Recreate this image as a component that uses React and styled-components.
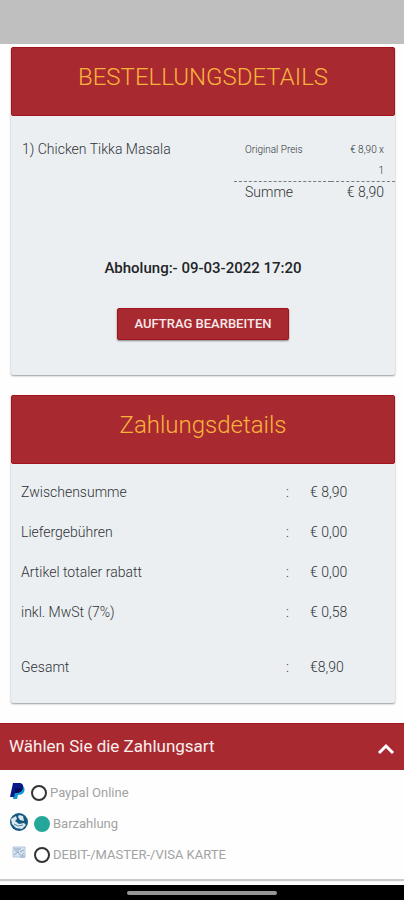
import React, { useState } from "react";
import styled, { createGlobalStyle } from "styled-components";

const GlobalStyle = createGlobalStyle`
  *, *::before, *::after { box-sizing: border-box; }
  body {
    margin: 0;
    background: #fefefe;
    color: #303336;
    font-family: Roboto, "Liberation Sans", sans-serif;
    font-size: 14px;
    line-height: 20px;
  }
`;

const Screen = styled.div`
  display: flex;
  flex-direction: column;
  min-height: 100vh;
`;

const StatusBar = styled.div`
  height: 44px;
  background: #bfbfbf;
`;

const Content = styled.main`
  flex: 1;
  display: flex;
  flex-direction: column;
  gap: 20px;
  padding-top: 3px;
`;

const Card = styled.section`
  margin: 0 9px 0 11px;
  background: #ebeff2;
  border-radius: 2px;
  box-shadow: 0 1px 2px rgba(0, 0, 0, 0.4);
`;

const CardTitle = styled.h2`
  margin: 0;
  padding: 14px 12px 22px;
  background: #a82a30;
  border: 1px solid #a3141c;
  border-radius: 2px;
  color: #fab43c;
  font-size: 24px;
  font-weight: 300;
  line-height: 31px;
  text-align: center;
`;

const OrderBody = styled.div`
  padding: 21px 0 35px;
`;

const OrderItem = styled.div`
  display: grid;
  grid-template-columns: 212fr 161fr;
  padding-left: 11px;
`;

const ItemName = styled.span`
  line-height: 24px;
  font-weight: 300;
`;

const PriceTable = styled.table`
  width: 100%;
  border-collapse: collapse;
  table-layout: fixed;
`;

const PriceRow = styled.tr`
  font-size: ${(p) => (p.$total ? "14px" : "10px")};
  font-weight: 300;
  line-height: ${(p) => (p.$total ? "20px" : "21px")};
  border-top: ${(p) => (p.$total ? "1px dashed #777b7e" : "0")};
`;

const PriceLabel = styled.th`
  padding: ${(p) => (p.$total ? "0" : "2px")} 0 0 11px;
  font-weight: inherit;
  text-align: left;
  vertical-align: top;
`;

const PriceValue = styled.td`
  width: 64px;
  padding: ${(p) => (p.$total ? "0" : "2px")} 11px 0 8px;
  text-align: right;
  vertical-align: top;
`;

const PickupTime = styled.p`
  margin: 56px 0 30px;
  color: #222426;
  font-size: 15px;
  font-weight: 500;
  text-align: center;
`;

const EditButton = styled.button`
  display: block;
  margin: 0 auto;
  padding: 6px 17px;
  border: 1px solid #a3141c;
  border-radius: 2px;
  background: #a82a30;
  box-shadow: 0 1px 2px rgba(0, 0, 0, 0.45);
  color: #f7e9ea;
  font: 500 13px/18px Roboto, "Liberation Sans", sans-serif;
  text-transform: uppercase;
  cursor: pointer;
`;

const Totals = styled.dl`
  display: flex;
  flex-direction: column;
  gap: 20px;
  margin: 0;
  padding: 18px 10px 26px;
  font-weight: 300;
`;

const TotalRow = styled.div`
  display: grid;
  grid-template-columns: 265fr 24px 75fr;
  margin-top: ${(p) => (p.$separated ? "15px" : "0")};
`;

const TotalLabel = styled.dt`
  min-width: 0;
`;

const TotalValue = styled.dd`
  margin: 0;
`;

const PaymentPanel = styled.section`
  margin-bottom: 5px;
  background: #fefefe;
  box-shadow: 0 2px 1px #cacaca;
`;

const PaymentToggle = styled.button`
  display: flex;
  justify-content: space-between;
  width: 100%;
  padding: 11px 8px 12px 9px;
  border: 0;
  border-top: 1px solid #a3141c;
  background: #a82a30;
  color: #fbeeee;
  font: 400 17px/23px Roboto, "Liberation Sans", sans-serif;
  text-align: left;
  cursor: pointer;
`;

const Chevron = styled.svg`
  align-self: flex-end;
  width: 20px;
  height: 20px;
  transform: ${(p) => (p.$open ? "none" : "rotate(180deg)")};
`;

const PaymentList = styled.div`
  padding: 7px 9px 9px;
  font-size: 13px;
`;

const PaymentOption = styled.label`
  display: flex;
  align-items: center;
  height: 31px;
  color: #a2a2a2;
  cursor: pointer;
`;

const IconSlot = styled.span`
  display: flex;
  width: ${(p) => (p.$wide ? "25px" : "22px")};
  height: 24px;
`;

const Radio = styled.input`
  appearance: none;
  width: 16px;
  height: 16px;
  margin: 0 3px 0 0;
  border: 2px solid #333;
  border-radius: 50%;
  background: #fff;

  &:checked {
    border-color: #26a69a;
    background: #26a69a;
  }
`;

const NavigationBar = styled.div`
  display: flex;
  justify-content: center;
  padding: 6px 0;
  height: 15px;
  background: #000;
`;

const HomeIndicator = styled.div`
  width: 37%;
  height: 4px;
  border-radius: 2px;
  background: #969696;
`;

const PaypalIcon = () => (
  <svg width="17" height="20" viewBox="0 0 17 20" aria-hidden="true">
    <path d="M6 5h7c3 1 3 4 2 6-1 2-3 3-6 3l-1 4H4z" fill="#139ad6" />
    <path d="M4 2h6c3 0 5 2 4 5-1 4-4 5-8 5l-1 4H1z" fill="#08198c" />
    <path d="M6 7h8c-1 4-4 5-8 5z" fill="#06105e" />
  </svg>
);

const CashIcon = () => (
  <svg width="20" height="20" viewBox="0 0 20 20" aria-hidden="true">
    <circle cx="10" cy="10" r="9" fill="#17587f" />
    <path d="M2 7l5-3 1 3-2 2 4 3 5-1 2 2-4 4-6-1-4-4z" fill="#dce9ef" />
    <path d="M10 3l4 1 1 5-4-1-2-3z" fill="#dce9ef" />
    <path d="M5 12l4 2 5-1" fill="none" stroke="#4f8aa8" />
  </svg>
);

const CardIcon = () => (
  <svg width="20" height="20" viewBox="0 0 20 20" aria-hidden="true">
    <path d="M4 4h12v10H4z" fill="#d7e3ef" stroke="#b4c8dc" />
    <path d="M5 6h7M6 8h4M11 9l4-2M5 12l4-3 3 4 3-3" fill="none" stroke="#8ba9c6" />
    <path d="M11 12h5v3h-5z" fill="#adc2d8" />
  </svg>
);

const totals = [
  { label: "Zwischensumme", value: "€ 8,90" },
  { label: "Liefergebühren", value: "€ 0,00" },
  { label: "Artikel totaler rabatt", value: "€ 0,00" },
  { label: "inkl. MwSt (7%)", value: "€ 0,58" },
  { label: "Gesamt", value: "€8,90", separated: true },
];

const methods = [
  { id: "paypal", label: "Paypal Online", Icon: PaypalIcon },
  { id: "cash", label: "Barzahlung", Icon: CashIcon, wide: true },
  { id: "card", label: "DEBIT-/MASTER-/VISA KARTE", Icon: CardIcon, wide: true },
];

export default function App() {
  const [method, setMethod] = useState("cash");
  const [open, setOpen] = useState(true);

  return (
    <Screen>
      <GlobalStyle />
      <StatusBar />
      <Content>
        <Card>
          <CardTitle>BESTELLUNGSDETAILS</CardTitle>
          <OrderBody>
            <OrderItem>
              <ItemName>1) Chicken Tikka Masala</ItemName>
              <PriceTable>
                <tbody>
                  <PriceRow>
                    <PriceLabel scope="row">Original Preis</PriceLabel>
                    <PriceValue>€ 8,90 x<br />1</PriceValue>
                  </PriceRow>
                  <PriceRow $total>
                    <PriceLabel scope="row" $total>Summe</PriceLabel>
                    <PriceValue $total>€ 8,90</PriceValue>
                  </PriceRow>
                </tbody>
              </PriceTable>
            </OrderItem>
            <PickupTime>Abholung:- 09-03-2022 17:20</PickupTime>
            <EditButton type="button">Auftrag bearbeiten</EditButton>
          </OrderBody>
        </Card>

        <Card>
          <CardTitle>Zahlungsdetails</CardTitle>
          <Totals>
            {totals.map(({ label, value, separated }) => (
              <TotalRow key={label} $separated={separated}>
                <TotalLabel>{label}</TotalLabel>
                <span aria-hidden="true">:</span>
                <TotalValue>{value}</TotalValue>
              </TotalRow>
            ))}
          </Totals>
        </Card>

        <PaymentPanel>
          <PaymentToggle type="button" aria-expanded={open} onClick={() => setOpen(!open)}>
            Wählen Sie die Zahlungsart
            <Chevron $open={open} viewBox="0 0 20 20" aria-hidden="true">
              <path d="M3 15l7-7 7 7" fill="none" stroke="#fff" strokeWidth="3" />
            </Chevron>
          </PaymentToggle>
          {open && (
            <PaymentList>
              {methods.map(({ id, label, Icon, wide }) => (
                <PaymentOption key={id}>
                  <IconSlot $wide={wide}><Icon /></IconSlot>
                  <Radio
                    type="radio"
                    name="payment"
                    checked={method === id}
                    onChange={() => setMethod(id)}
                  />
                  {label}
                </PaymentOption>
              ))}
            </PaymentList>
          )}
        </PaymentPanel>
      </Content>
      <NavigationBar><HomeIndicator /></NavigationBar>
    </Screen>
  );
}
